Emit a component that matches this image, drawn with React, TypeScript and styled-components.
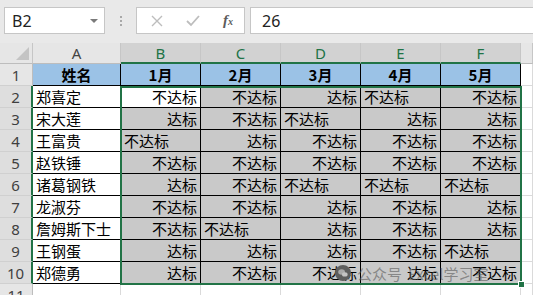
import React from "react";
import styled, { createGlobalStyle } from "styled-components";

const GREEN = "#217346";

type Align = "l" | "r";
type Mark = [string, Align];

const N = "不达标";
const D = "达标";

const people: { name: string; marks: Mark[] }[] = [
  { name: "郑喜定", marks: [[N, "r"], [N, "r"], [D, "r"], [N, "l"], [N, "r"]] },
  { name: "宋大莲", marks: [[D, "r"], [N, "r"], [N, "l"], [D, "r"], [D, "r"]] },
  { name: "王富贵", marks: [[N, "l"], [D, "r"], [N, "r"], [N, "r"], [N, "r"]] },
  { name: "赵铁锤", marks: [[N, "r"], [N, "r"], [N, "r"], [N, "r"], [N, "r"]] },
  { name: "诸葛钢铁", marks: [[D, "r"], [N, "r"], [N, "l"], [N, "l"], [N, "l"]] },
  { name: "龙淑芬", marks: [[N, "r"], [N, "r"], [D, "r"], [N, "r"], [D, "r"]] },
  { name: "詹姆斯下士", marks: [[N, "r"], [N, "l"], [D, "r"], [N, "r"], [D, "r"]] },
  { name: "王钢蛋", marks: [[D, "r"], [D, "r"], [D, "r"], [N, "r"], [N, "l"]] },
  { name: "郑德勇", marks: [[D, "r"], [N, "r"], [N, "r"], [D, "r"], [N, "r"]] },
];

const months = ["1月", "2月", "3月", "4月", "5月"];
const letters = ["A", "B", "C", "D", "E", "F"];

const GlobalStyle = createGlobalStyle`
  html, body {
    margin: 0;
    padding: 0;
    overflow: hidden;
    background: #ffffff;
  }
  body {
    font-family: "Noto Sans", "Noto Sans CJK SC", sans-serif;
  }
`;

const App = () => {
  return (
    <Page>
      <GlobalStyle />
      <FormulaBar>
        <NameBox>
          B2
          <DropArrow />
        </NameBox>
        <Grip>
          <i />
          <i />
          <i />
        </Grip>
        <ActionBox>
          <svg width="12" height="12" viewBox="0 0 12 12">
            <path d="M1 1 L11 11 M11 1 L1 11" stroke="#bdbdbd" strokeWidth="1.4" fill="none" />
          </svg>
          <svg width="14" height="12" viewBox="0 0 14 12">
            <path d="M1 6 L5 10 L13 1" stroke="#bdbdbd" strokeWidth="1.8" fill="none" />
          </svg>
          <Fx>
            f<sub>x</sub>
          </Fx>
        </ActionBox>
        <FormulaInput>26</FormulaInput>
      </FormulaBar>

      <Sheet>
        <Corner $r={1} $c={1}>
          <svg width="13" height="13" viewBox="0 0 13 13">
            <polygon points="13,0 13,13 0,13" fill="#c4c4c4" />
          </svg>
        </Corner>
        {letters.map((l, i) => (
          <ColHead key={l} $r={1} $c={i + 2} $sel={i > 0}>
            {l}
          </ColHead>
        ))}
        <ColHead $r={1} $c={8} $sel={false} />

        {Array.from({ length: 11 }, (_, i) => (
          <RowHead key={i} $r={i + 2} $c={1} $sel={i >= 1 && i <= 9}>
            {i + 1}
          </RowHead>
        ))}

        <TitleCell $r={2} $c={2}>姓名</TitleCell>
        {months.map((m, i) => (
          <TitleCell key={m} $r={2} $c={i + 3}>
            {m}
          </TitleCell>
        ))}
        <BlankCell $r={2} $c={8} />

        {people.map((p, ri) => (
          <React.Fragment key={p.name}>
            <NameCell $r={ri + 3} $c={2}>{p.name}</NameCell>
            {p.marks.map(([txt, al], ci) => (
              <MarkCell
                key={ci}
                $r={ri + 3}
                $c={ci + 3}
                $align={al}
                $active={ri === 0 && ci === 0}
              >
                {txt}
              </MarkCell>
            ))}
            <BlankCell $r={ri + 3} $c={8} />
          </React.Fragment>
        ))}

        {Array.from({ length: 7 }, (_, i) => (
          <BlankCell key={i} $r={12} $c={i + 2} />
        ))}

        <Selection>
          <FillHandle />
        </Selection>

        <Watermark>
          <svg width="16" height="16" viewBox="0 0 16 16">
            <circle cx="8" cy="8" r="8" fill="#5e5e5e" />
            <ellipse cx="6.6" cy="7" rx="3.4" ry="2.7" fill="#a9a9a9" />
            <ellipse cx="9.8" cy="9.4" rx="2.8" ry="2.2" fill="#c4c4c4" />
          </svg>
          <span>公众号</span>
          <span>Excel学习室</span>
        </Watermark>
      </Sheet>
    </Page>
  );
};

interface IPos {
  $r: number;
  $c: number;
}

const Page = styled.div`
  width: 533px;
  height: 295px;
  overflow: hidden;
  display: flex;
  flex-direction: column;
`;

const FormulaBar = styled.div`
  height: 43px;
  flex: none;
  box-sizing: border-box;
  background: #e9e9e9;
  display: flex;
  align-items: flex-start;
  padding: 7px 0 0 4px;
`;

const NameBox = styled.div`
  position: relative;
  width: 101px;
  height: 27px;
  box-sizing: border-box;
  background: #ffffff;
  border: 1px solid #c6c6c6;
  display: flex;
  align-items: center;
  padding-left: 7px;
  font-family: "Noto Sans", sans-serif;
  font-size: 16px;
  color: #222;
`;

const DropArrow = styled.span`
  position: absolute;
  right: 6px;
  top: 11px;
  border-left: 4px solid transparent;
  border-right: 4px solid transparent;
  border-top: 4px solid #7a7a7a;
`;

const Grip = styled.div`
  width: 31px;
  height: 27px;
  display: flex;
  flex-direction: column;
  align-items: center;
  justify-content: center;
  gap: 2px;

  i {
    width: 2px;
    height: 2px;
    background: #a8a8a8;
  }
`;

const ActionBox = styled.div`
  width: 109px;
  height: 27px;
  box-sizing: border-box;
  background: #ffffff;
  border: 1px solid #c6c6c6;
  display: flex;
  align-items: center;
  justify-content: space-between;
  padding: 0 11px 0 14px;
`;

const Fx = styled.span`
  font-family: "Liberation Serif", serif;
  font-style: italic;
  font-weight: bold;
  font-size: 15px;
  color: #5c5c5c;

  sub {
    font-size: 10px;
    vertical-align: 0;
  }
`;

const FormulaInput = styled.div`
  flex: 1;
  margin-left: 5px;
  height: 27px;
  box-sizing: border-box;
  background: #ffffff;
  border: 1px solid #c6c6c6;
  border-right: none;
  display: flex;
  align-items: center;
  padding-left: 11px;
  font-family: "Noto Sans", sans-serif;
  font-size: 16px;
  color: #222;
`;

const Sheet = styled.div`
  flex: 1;
  display: grid;
  grid-template-columns: 33px 88px repeat(5, 80px) 1fr;
  grid-template-rows: 21px repeat(10, 22px) 22px;
  background: #ffffff;
`;

const Cell = styled.div<IPos>`
  grid-row: ${(p) => p.$r};
  grid-column: ${(p) => p.$c};
  box-sizing: border-box;
  display: flex;
  align-items: center;
  overflow: hidden;
  white-space: nowrap;
  font-family: "Noto Sans CJK SC", "Noto Sans", sans-serif;
  font-size: 15px;
  color: #000;
`;

const Corner = styled(Cell)`
  background: #e6e6e6;
  border-right: 1px solid #c6c6c6;
  border-bottom: 1px solid #bdbdbd;
  align-items: flex-end;
  justify-content: flex-end;
  padding: 0 3px 3px 0;
`;

const ColHead = styled(Cell)<{ $sel: boolean }>`
  justify-content: center;
  font-family: "Noto Sans", sans-serif;
  font-size: 15px;
  background: ${(p) => (p.$sel ? "#d2d2d2" : "#e6e6e6")};
  color: ${(p) => (p.$sel ? GREEN : "#444")};
  border-right: 1px solid #c6c6c6;
  border-bottom: ${(p) => (p.$sel ? `2px solid ${GREEN}` : "1px solid #bdbdbd")};
`;

const RowHead = styled(Cell)<{ $sel: boolean }>`
  justify-content: center;
  font-family: "Noto Sans", sans-serif;
  font-size: 15px;
  background: ${(p) => (p.$sel ? "#dedede" : "#e6e6e6")};
  color: ${(p) => (p.$sel ? "#3f3f3f" : "#444")};
  border-bottom: 1px solid #d0d0d0;
  border-right: ${(p) => (p.$sel ? `2px solid ${GREEN}` : "1px solid #bdbdbd")};
`;

const TitleCell = styled(Cell)`
  justify-content: center;
  font-weight: bold;
  background: #9bc2e6;
  border-right: 1px solid #000;
  border-bottom: 1px solid #000;
`;

const NameCell = styled(Cell)`
  padding-left: 3px;
  background: #ffffff;
  border-right: 1px solid #000;
  border-bottom: 1px solid #000;
`;

const MarkCell = styled(Cell)<{ $align: Align; $active: boolean }>`
  justify-content: ${(p) => (p.$align === "r" ? "flex-end" : "flex-start")};
  padding: 0 3px;
  background: ${(p) => (p.$active ? "#ffffff" : "#c9c9c9")};
  border-right: 1px solid #000;
  border-bottom: 1px solid #000;
`;

const BlankCell = styled(Cell)`
  border-right: 1px solid #dadada;
  border-bottom: 1px solid #dadada;
`;

const Selection = styled.div`
  grid-row: 3 / 12;
  grid-column: 3 / 8;
  position: relative;
  z-index: 3;
  margin: 0 -1px -1px -1px;
  border: 2px solid ${GREEN};
  pointer-events: none;
`;

const FillHandle = styled.span`
  position: absolute;
  right: -5px;
  bottom: -5px;
  width: 5px;
  height: 5px;
  background: ${GREEN};
  border: 1px solid #ffffff;
`;

const Watermark = styled.div`
  grid-row: 11;
  grid-column: 5 / 9;
  z-index: 2;
  display: flex;
  align-items: center;
  gap: 6px;
  padding-left: 54px;
  font-family: "Noto Sans CJK SC", "Noto Sans", sans-serif;
  font-size: 15px;
  color: rgba(90, 90, 90, 0.6);
  pointer-events: none;
`;

export default App;
